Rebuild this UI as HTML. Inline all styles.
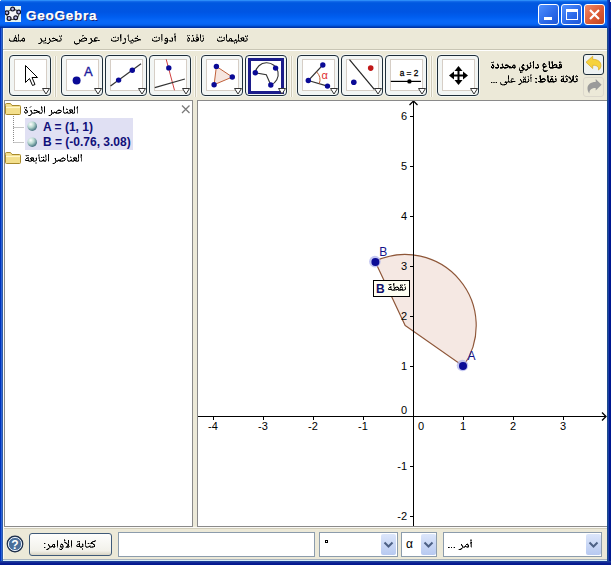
<!DOCTYPE html>
<html><head><meta charset="utf-8"><style>
*{margin:0;padding:0;box-sizing:border-box}
html,body{width:611px;height:565px;overflow:hidden;background:#0b3fc8;font-family:"Liberation Sans",sans-serif}
.abs{position:absolute}
#title{position:absolute;left:0;top:0;width:611px;height:28px;
 background:linear-gradient(#2b8cf8 0px,#2b8cf8 1px,#1a70ec 1px,#0a62e6 2px,#0058e0 3px,#0055e3 12px,#005ef0 17px,#0868f8 21px,#0866f6 24px,#0054da 26px,#0054da 26px,#0035a8 27px,#0035a8 28px)}
#client{position:absolute;left:3px;top:28px;width:604px;height:533px;background:#ece9d8;border-top:1px solid #eef0f2;border-left:1px solid #fbfaf4}
.cap{position:absolute;top:4px;width:21px;height:21px;border:1px solid #fff;border-radius:3px;
 background:linear-gradient(135deg,#4f90ff,#2a68e8 60%,#1f58d8)}
.tb{position:absolute;top:55px;width:42px;height:41px;border:1px solid #1e2e3a;border-radius:4px;background:#f2f5f4;box-shadow:0 0 0 1px #f4f6f2}
.ti{position:absolute;left:4px;top:3px;width:33px;height:32px;border:1px solid #d6cec6;background:#fff}
.tsel{position:absolute;top:58px;width:36px;height:36px;border:3px solid #1c1c8a;background:#fff}
.sep{position:absolute;top:56px;width:3px;height:41px;border-left:1px solid #f8f7f0;border-right:1px solid #f8f7f0;background:#d0ccba}
</style></head><body>
<div id="title"></div>
<div id="client"></div>
<!-- title icon -->
<div class="abs" style="left:5px;top:6px;width:16px;height:16px;background:#e6f2f0"></div>
<svg class="abs" style="left:5px;top:6px" width="16" height="16" viewBox="0 0 16 16">
 <ellipse cx="7.8" cy="8.4" rx="6" ry="5" fill="#f4f4f8" stroke="#555" stroke-width="1.1" transform="rotate(-8 7.8 8.4)"/>
 <g fill="#b8b8e8" stroke="#0e0e20" stroke-width="1.2"><circle cx="7.6" cy="3.1" r="1.9"/><circle cx="13.7" cy="6.1" r="1.9"/><circle cx="1.9" cy="6.7" r="1.9"/><circle cx="4.1" cy="12.4" r="1.9"/><circle cx="10.7" cy="11.8" r="1.9"/></g>
</svg>
<div class="abs" style="left:26px;top:8px;font-size:13.5px;font-weight:bold;color:#fff;letter-spacing:0.75px;-webkit-text-stroke:0.25px #fff;text-shadow:1px 1px 0 #0a1a70;line-height:16px">GeoGebra</div>
<div class="cap" style="left:538px"><div class="abs" style="left:5px;top:12px;width:8px;height:3px;background:#fff"></div></div>
<div class="cap" style="left:561px"><div class="abs" style="left:4px;top:4px;width:12px;height:11px;border:1px solid #fff;border-top-width:3px"></div></div>
<div class="cap" style="left:584px;background:linear-gradient(135deg,#f08a6a,#dc5a34 55%,#c04420)">
 <svg class="abs" style="left:0;top:0" width="19" height="19"><path d="M5 5 L14 14 M14 5 L5 14" stroke="#fff" stroke-width="2.2"/></svg></div>

<!-- menubar separator -->
<div class="abs" style="left:3px;top:49px;width:604px;height:1px;background:#c8c5b4"></div>
<div class="abs" style="left:3px;top:50px;width:604px;height:1px;background:#fff"></div>

<!-- toolbar -->
<div class="tb" style="left:9px"><div class="ti"></div></div><div class="tb" style="left:61px"><div class="ti"></div></div><div class="tb" style="left:105px"><div class="ti"></div></div><div class="tb" style="left:149px"><div class="ti"></div></div><div class="tb" style="left:201px"><div class="ti"></div></div><div class="tb" style="left:245px"></div><div class="tsel" style="left:248px"></div><div class="tb" style="left:297px"><div class="ti"></div></div><div class="tb" style="left:341px"><div class="ti"></div></div><div class="tb" style="left:385px"><div class="ti"></div></div><div class="tb" style="left:437px"><div class="ti"></div></div>
<div class="sep" style="left:54px"></div>
<div class="sep" style="left:194px"></div>
<div class="sep" style="left:290px"></div>
<div class="sep" style="left:430px"></div>
<!-- undo btn -->
<div class="abs" style="left:583px;top:54px;width:21px;height:21px;border:1px solid #1e2e3a;border-radius:3px;background:#eef2f2"></div>
<div class="abs" style="left:583px;top:77px;width:21px;height:20px;border:1px solid #dcd8cc;border-radius:3px"></div>

<svg style="position:absolute;left:0;top:0" width="611" height="101" viewBox="0 0 611 101">
 <defs>
  <path id="tri" d="M0 0 L7 0 L3.5 5.5 Z" fill="#fff" stroke="#333" stroke-width="1"/>
 </defs>
 <!-- triangles -->
 <use href="#tri" x="42.5" y="88.5"/><use href="#tri" x="94.5" y="88.5"/><use href="#tri" x="138.5" y="88.5"/><use href="#tri" x="182.5" y="88.5"/><use href="#tri" x="234.5" y="88.5"/><use href="#tri" x="278.5" y="88.5"/><use href="#tri" x="330.5" y="88.5"/><use href="#tri" x="374.5" y="88.5"/><use href="#tri" x="418.5" y="88.5"/><use href="#tri" x="470.5" y="88.5"/>
 <!-- arrow cursor -->
 <path d="M25.5 65.5 L25.5 82.5 L29.5 78.5 L32.5 85.5 L35 84.5 L32 77.5 L37.5 77.5 Z" fill="#fff" stroke="#000" stroke-width="1"/>
 <!-- point A -->
 <circle cx="76.6" cy="80.5" r="4" fill="#0a0a96"/>
 <text x="84" y="75.5" font-family="Liberation Sans" font-size="13" fill="#1c1c9c" stroke="#1c1c9c" stroke-width="0.35">A</text>
 <!-- line through 2 pts -->
 <line x1="110.5" y1="86" x2="141" y2="63.7" stroke="#333" stroke-width="1.2"/>
 <circle cx="118.6" cy="80.1" r="2.7" fill="#0a0a96"/>
 <circle cx="132.3" cy="70.2" r="2.7" fill="#0a0a96"/>
 <!-- perpendicular -->
 <line x1="166.2" y1="59.3" x2="174.5" y2="90.3" stroke="#d04040" stroke-width="1"/>
 <line x1="154.8" y1="87.6" x2="184.9" y2="79" stroke="#333" stroke-width="1.2"/>
 <circle cx="168.8" cy="67.9" r="2.7" fill="#0a0a96"/>
 <!-- polygon -->
 <path d="M216.4 66.4 L232.3 77 L214.1 84.7 Z" fill="#f6e6e0" stroke="#c0603a" stroke-width="1"/>
 <circle cx="216.4" cy="66.4" r="2.7" fill="#0a0a96"/>
 <circle cx="232.3" cy="77" r="2.7" fill="#0a0a96"/>
 <circle cx="214.1" cy="84.7" r="2.7" fill="#0a0a96"/>
 <!-- sector -->
 <path d="M255.3 72.8 A11.5 11.5 0 1 1 270.8 85 L266.3 74.8 Z" fill="none" stroke="#333" stroke-width="1.1"/>
 <circle cx="255.3" cy="72.8" r="2.7" fill="#0a0a96"/>
 <circle cx="275.6" cy="68.1" r="2.7" fill="#0a0a96"/>
 <circle cx="270.8" cy="85" r="2.7" fill="#0a0a96"/>
 <!-- angle -->
 <path d="M322.8 65 L308.3 80.5 L327.5 86.1" fill="none" stroke="#333" stroke-width="1.1"/>
 <path d="M316.5 71.8 A11.5 11.5 0 0 1 319.3 83.7" fill="none" stroke="#c0603a" stroke-width="1"/>
 <text x="321.5" y="79" font-family="Liberation Sans" font-size="11" fill="#e03030">α</text>
 <circle cx="322.8" cy="65" r="2.7" fill="#0a0a96"/>
 <circle cx="308.3" cy="80.5" r="2.7" fill="#0a0a96"/>
 <circle cx="327.5" cy="86.1" r="2.7" fill="#0a0a96"/>
 <!-- line + points -->
 <line x1="349.5" y1="59.7" x2="374.3" y2="89.4" stroke="#222" stroke-width="1.2"/>
 <circle cx="370.7" cy="68.1" r="2.8" fill="#c01818"/>
 <circle cx="353.8" cy="82.3" r="2.8" fill="#0a0a96"/>
 <!-- slider -->
 <text x="399.7" y="76" font-family="Liberation Sans" font-size="9.5" fill="#000" stroke="#000" stroke-width="0.3" textLength="18.6" lengthAdjust="spacingAndGlyphs">a = 2</text>
 <line x1="390.8" y1="81.4" x2="421" y2="81.4" stroke="#000" stroke-width="1.2"/>
 <circle cx="409.4" cy="81.4" r="2.2" fill="#000"/>
 <!-- move -->
 <g fill="#000">
  <rect x="454" y="74.5" width="9" height="2"/>
  <rect x="457.5" y="71" width="2" height="9"/>
  <path d="M449 75.5 L454 71.5 L454 79.5 Z"/>
  <path d="M468 75.5 L463 71.5 L463 79.5 Z"/>
  <path d="M458.5 66 L454.5 71 L462.5 71 Z"/>
  <path d="M458.5 85 L454.5 80 L462.5 80 Z"/>
 </g>
 <!-- undo -->
 <path d="M586 62.2 L592.7 56.2 L592.7 59.3 C597.5 59.3 601 61.5 601 65.5 C601 67.5 600 69 598.5 70 C599 67 597.5 65.3 592.7 65.3 L592.7 68.5 Z" fill="#f6d23c" stroke="#d8a820" stroke-width="0.7"/>
 <!-- redo -->
 <path d="M601.6 84.7 L595.7 79.1 L595.7 82 C590.5 82 587.5 84.5 587.5 88.5 C587.5 90.5 588.3 92.3 589.5 93.6 C589.2 90.5 590.5 88 595.7 88 L595.7 90.6 Z" fill="#9a9a9a"/>
</svg>


<!-- algebra panel -->
<div class="abs" style="left:4px;top:100px;width:189px;height:427px;border:1px solid #8a8a8a;background:#fff"></div>
<!-- graphics panel -->
<div class="abs" style="left:197px;top:100px;width:410px;height:427px;border-top:1px solid #8a8a8a;border-left:1px solid #8a8a8a;border-bottom:1px solid #8a8a8a;background:#fff"></div>

<svg class="abs" style="left:198px;top:101px" width="409" height="425" viewBox="198 101 409 425">
<path d="M405.2 325.5 L463.35 366.24 A71 71 0 0 0 375.00 261.24 Z" fill="#f5e8e3" stroke="#8e5638" stroke-width="1.15"/>
<g stroke="#000" stroke-width="1" shape-rendering="crispEdges">
<line x1="198" y1="416.5" x2="605" y2="416.5"/>
<line x1="413.5" y1="102" x2="413.5" y2="526"/>
<line x1="213.5" y1="416" x2="213.5" y2="420"/>
<line x1="263.5" y1="416" x2="263.5" y2="420"/>
<line x1="313.5" y1="416" x2="313.5" y2="420"/>
<line x1="363.5" y1="416" x2="363.5" y2="420"/>
<line x1="463.5" y1="416" x2="463.5" y2="420"/>
<line x1="513.5" y1="416" x2="513.5" y2="420"/>
<line x1="563.5" y1="416" x2="563.5" y2="420"/>
<line x1="410" y1="516.5" x2="414" y2="516.5"/>
<line x1="410" y1="466.5" x2="414" y2="466.5"/>
<line x1="410" y1="366.5" x2="414" y2="366.5"/>
<line x1="410" y1="316.5" x2="414" y2="316.5"/>
<line x1="410" y1="266.5" x2="414" y2="266.5"/>
<line x1="410" y1="216.5" x2="414" y2="216.5"/>
<line x1="410" y1="166.5" x2="414" y2="166.5"/>
<line x1="410" y1="116.5" x2="414" y2="116.5"/>
</g>
<path d="M602 412.5 L606 416.5 L602 420.5 M409.5 105 L413.5 101 L417.5 105" fill="none" stroke="#000" stroke-width="1.3"/>
<g font-family="Liberation Sans" font-size="11" fill="#000">
<text x="213" y="430" text-anchor="middle">-4</text>
<text x="263" y="430" text-anchor="middle">-3</text>
<text x="313" y="430" text-anchor="middle">-2</text>
<text x="363" y="430" text-anchor="middle">-1</text>
<text x="421" y="430" text-anchor="middle">0</text>
<text x="463" y="430" text-anchor="middle">1</text>
<text x="513" y="430" text-anchor="middle">2</text>
<text x="563" y="430" text-anchor="middle">3</text>
<text x="407" y="520" text-anchor="end">-2</text>
<text x="407" y="470" text-anchor="end">-1</text>
<text x="407" y="414" text-anchor="end">0</text>
<text x="407" y="370" text-anchor="end">1</text>
<text x="407" y="320" text-anchor="end">2</text>
<text x="407" y="270" text-anchor="end">3</text>
<text x="407" y="220" text-anchor="end">4</text>
<text x="407" y="170" text-anchor="end">5</text>
<text x="407" y="120" text-anchor="end">6</text>
</g>
<circle cx="462.5" cy="365.5" r="5.8" fill="#b0b4ec" opacity="0.75"/>
<circle cx="463" cy="366" r="4" fill="#0c0c96"/>
<circle cx="374.9" cy="261.6" r="5.8" fill="#b0b4ec" opacity="0.75"/>
<circle cx="375.4" cy="262.1" r="4" fill="#0c0c96"/>
<text x="467.5" y="359.5" font-family="Liberation Sans" font-size="12" fill="#14148a">A</text>
<text x="379.3" y="256" font-family="Liberation Sans" font-size="12" fill="#14148a">B</text>
<rect x="373.5" y="280.5" width="36" height="16" fill="#fefef2" stroke="#000" stroke-width="1"/>
<text x="376" y="293" font-family="Liberation Sans" font-size="12" font-weight="bold" fill="#10106a">B</text>
</svg>

<!-- bottom bar -->
<div class="abs" style="left:4px;top:527px;width:603px;height:1px;background:#fbfaf6"></div>
<div class="abs" style="left:4px;top:528px;width:603px;height:1px;background:#d2cebb"></div>
<div class="abs" style="left:3px;top:559px;width:604px;height:1px;background:#a8b4c0"></div>
<div class="abs" style="left:3px;top:560px;width:604px;height:1px;background:#d4ecf8"></div>
<div class="abs" style="left:0;top:561px;width:611px;height:4px;background:linear-gradient(#183b8c,#1c3ca0 25%,#0c1c90 50%,#001890)"></div>
<div class="abs" style="left:0;top:28px;width:3px;height:533px;background:linear-gradient(90deg,#0033bb 33%,#2b62d8 33%,#2b62d8 66%,#2c5aa8 66%)"></div>
<div class="abs" style="left:607px;top:28px;width:4px;height:533px;background:linear-gradient(90deg,#1c4a8a 25%,#1c3ea8 25%,#1c3ea8 50%,#001890 50%)"></div>
<div class="abs" style="left:607px;top:0;width:4px;height:28px;background:linear-gradient(90deg,#0848d0 25%,#0838b8 25%,#0838b8 50%,#0424a0 50%)"></div>
<div class="abs" style="left:610px;top:0;width:1px;height:2px;background:#e8eef8"></div><div class="abs" style="left:0;top:0;width:1px;height:1px;background:#e8eef8"></div>


<svg class="abs" style="left:6px;top:535px" width="18" height="18" viewBox="0 0 18 18">
 <circle cx="9" cy="9" r="7.8" fill="#4a6f9a" stroke="#1e2e48" stroke-width="1.2"/>
 <circle cx="9" cy="9" r="6.6" fill="none" stroke="#e8eef8" stroke-width="1"/>
 <text x="9" y="13.5" text-anchor="middle" font-family="Liberation Sans" font-weight="bold" font-size="12" fill="#fff">?</text>
</svg>
<div class="abs" style="left:29px;top:533px;width:83px;height:23px;border:1px solid #3f5a78;border-radius:3px;background:linear-gradient(#fefefd,#f2f1ea 80%,#d8d4c4)"></div>
<div class="abs" style="left:118px;top:532px;width:197px;height:25px;border:1px solid #8c9cac;background:#fff"></div>
<div class="abs" style="left:319px;top:532px;width:79px;height:25px;border:1px solid #8c9cac;background:#fff"></div>
<div class="abs" style="left:401px;top:532px;width:36px;height:25px;border:1px solid #8c9cac;background:#fff"></div>
<div class="abs" style="left:443px;top:532px;width:159px;height:25px;border:1px solid #8c9cac;background:#fff"></div>
<div class="abs" style="left:381px;top:534px;width:15px;height:21px;border-radius:2px;background:linear-gradient(#dce6fb,#b7c9f0)">
<svg class="abs" style="left:0;top:0" width="15" height="21"><path d="M3.5 8.5 L7.5 12.5 L11.5 8.5" fill="none" stroke="#4d6185" stroke-width="2"/></svg></div><div class="abs" style="left:421px;top:534px;width:15px;height:21px;border-radius:2px;background:linear-gradient(#dce6fb,#b7c9f0)">
<svg class="abs" style="left:0;top:0" width="15" height="21"><path d="M3.5 8.5 L7.5 12.5 L11.5 8.5" fill="none" stroke="#4d6185" stroke-width="2"/></svg></div><div class="abs" style="left:586px;top:534px;width:15px;height:21px;border-radius:2px;background:linear-gradient(#dce6fb,#b7c9f0)">
<svg class="abs" style="left:0;top:0" width="15" height="21"><path d="M3.5 8.5 L7.5 12.5 L11.5 8.5" fill="none" stroke="#4d6185" stroke-width="2"/></svg></div><div class="abs" style="left:325px;top:540px;width:3px;height:3px;border:1px solid #000"></div><div class="abs" style="left:406px;top:537px;font-size:12px;line-height:14px;color:#000">α</div>


<div class="abs" style="left:25px;top:118px;width:108px;height:32px;background:#e0e0f3"></div>
<svg class="abs" style="left:4px;top:101px" width="189" height="70" viewBox="4 101 189 70">
 <defs>
  <g id="folder">
   <path d="M0.5 2.5 L0.5 10.5 Q0.5 11.5 1.5 11.5 L14.5 11.5 Q15.5 11.5 15.5 10.5 L15.5 3.5 Q15.5 2.5 14.5 2.5 L7 2.5 L5.5 0.5 L1.5 0.5 Q0.5 0.5 0.5 1.5 Z" fill="#f3df8c" stroke="#a88a2c" stroke-width="1"/>
   <path d="M1 4.5 L15 4.5" stroke="#fff6c8" stroke-width="1.2"/>
  </g>
  <radialGradient id="sph" cx="0.35" cy="0.3" r="0.75"><stop offset="0" stop-color="#ffffff"/><stop offset="0.45" stop-color="#b8d8d0"/><stop offset="1" stop-color="#3a6878"/></radialGradient>
 </defs>
 <use href="#folder" x="5" y="103"/>
 <use href="#folder" x="5" y="152"/>
 <path d="M13.5 116 V142.5 M13.5 127.5 H24 M13.5 142.5 H24" stroke="#8a8a8a" stroke-width="1" stroke-dasharray="1 1" fill="none"/>
 <circle cx="32.2" cy="126.2" r="4.8" fill="url(#sph)"/>
 <circle cx="32.2" cy="142.2" r="4.8" fill="url(#sph)"/>
 <path d="M182 105.5 L189.5 113 M189.5 105.5 L182 113" stroke="#7a7a7a" stroke-width="1.3"/>
</svg>
<div class="abs" style="left:43px;top:120px;font-size:12px;font-weight:bold;color:#10107a;line-height:14px;white-space:nowrap">A = (1, 1)</div>
<div class="abs" style="left:43px;top:135px;font-size:12px;font-weight:bold;color:#10107a;line-height:14px;white-space:nowrap">B = (-0.76, 3.08)</div>
<svg class="abs" style="left:9px;top:29px" width="16" height="20" shape-rendering="crispEdges"><path fill="#000" fill-opacity="0.35" d="M5 8h1v1h-1zM7 8h1v1h-1zM14 8h1v1h-1zM0 9h1v1h-1zM6 9h1v1h-1zM4 10h1v1h-1zM12 10h1v1h-1zM2 11h2v1h-2zM8 11h1v1h-1zM5 12h2v1h-2zM9 12h2v1h-2zM13 12h1v1h-1zM15 12h1v1h-1z"/><path fill="#000" fill-opacity="0.7" d="M9 5h1v1h-1zM6 6h1v1h-1zM6 7h1v1h-1zM9 7h1v1h-1zM9 8h1v1h-1zM9 9h1v1h-1zM13 9h1v1h-1zM15 9h1v1h-1zM0 10h1v1h-1zM5 10h1v1h-1zM7 10h1v1h-1zM9 10h1v1h-1zM13 10h1v1h-1zM1 11h1v1h-1zM4 11h1v1h-1zM10 11h2v1h-2zM14 11h1v1h-1zM1 12h4v1h-4zM7 12h2v1h-2zM11 12h1v1h-1zM14 12h1v1h-1z"/><path fill="#000" fill-opacity="1.0" d="M9 6h1v1h-1zM6 8h1v1h-1zM5 9h1v1h-1zM7 9h1v1h-1zM14 9h1v1h-1zM15 10h1v1h-1zM0 11h1v1h-1zM5 11h3v1h-3zM9 11h1v1h-1zM12 11h2v1h-2zM15 11h1v1h-1z"/></svg>
<svg class="abs" style="left:38px;top:29px" width="24" height="20" shape-rendering="crispEdges"><path fill="#000" fill-opacity="0.35" d="M21 6h1v1h-1zM22 7h1v1h-1zM7 8h1v1h-1zM15 8h1v1h-1zM22 8h1v1h-1zM3 9h1v1h-1zM17 9h1v1h-1zM23 9h1v1h-1zM2 10h1v1h-1zM12 10h1v1h-1zM22 10h1v1h-1zM5 11h1v1h-1zM11 11h1v1h-1zM13 11h2v1h-2zM20 11h1v1h-1zM23 11h1v1h-1zM6 12h1v1h-1zM11 12h1v1h-1zM15 12h1v1h-1zM22 12h1v1h-1zM5 13h2v1h-2zM8 13h1v1h-1zM10 13h1v1h-1zM5 14h4v1h-4z"/><path fill="#000" fill-opacity="0.7" d="M23 6h1v1h-1zM21 7h1v1h-1zM23 7h1v1h-1zM2 9h1v1h-1zM22 9h1v1h-1zM7 10h1v1h-1zM19 10h1v1h-1zM23 10h1v1h-1zM4 11h1v1h-1zM6 11h1v1h-1zM15 11h1v1h-1zM17 11h1v1h-1zM19 11h1v1h-1zM21 11h2v1h-2zM3 12h3v1h-3zM12 12h3v1h-3zM19 12h3v1h-3zM2 13h2v1h-2zM7 13h1v1h-1zM0 14h1v1h-1zM2 14h1v1h-1z"/><path fill="#000" fill-opacity="1.0" d="M7 9h1v1h-1zM11 9h1v1h-1zM14 9h3v1h-3zM3 10h1v1h-1zM11 10h1v1h-1zM17 10h2v1h-2zM3 11h1v1h-1zM7 11h1v1h-1zM12 11h1v1h-1zM16 11h1v1h-1zM18 11h1v1h-1zM11 13h1v1h-1zM1 14h1v1h-1zM9 14h2v1h-2z"/></svg>
<svg class="abs" style="left:74px;top:29px" width="26" height="20" shape-rendering="crispEdges"><path fill="#000" fill-opacity="0.35" d="M8 7h1v1h-1zM11 8h1v1h-1zM23 8h1v1h-1zM22 9h2v1h-2zM8 10h1v1h-1zM16 10h1v1h-1zM21 10h1v1h-1zM8 11h2v1h-2zM19 11h1v1h-1zM10 12h1v1h-1zM22 12h1v1h-1zM5 14h1v1h-1zM1 15h1v1h-1zM3 15h1v1h-1z"/><path fill="#000" fill-opacity="0.7" d="M8 6h2v1h-2zM10 8h1v1h-1zM21 8h2v1h-2zM8 9h1v1h-1zM10 9h1v1h-1zM16 9h2v1h-2zM20 9h2v1h-2zM5 10h1v1h-1zM7 11h1v1h-1zM10 11h1v1h-1zM12 11h1v1h-1zM17 11h1v1h-1zM23 11h1v1h-1zM25 11h1v1h-1zM0 12h1v1h-1zM5 12h5v1h-5zM17 12h5v1h-5zM5 13h1v1h-1zM16 13h1v1h-1zM0 14h1v1h-1zM2 14h1v1h-1zM14 14h1v1h-1zM16 14h1v1h-1zM2 15h1v1h-1z"/><path fill="#000" fill-opacity="1.0" d="M9 9h1v1h-1zM11 9h2v1h-2zM7 10h1v1h-1zM12 10h1v1h-1zM17 10h1v1h-1zM20 10h1v1h-1zM5 11h2v1h-2zM11 11h1v1h-1zM18 11h1v1h-1zM20 11h3v1h-3zM24 11h1v1h-1zM0 13h1v1h-1zM17 13h1v1h-1zM1 14h1v1h-1zM3 14h2v1h-2zM15 14h1v1h-1z"/></svg>
<svg class="abs" style="left:111px;top:29px" width="30" height="20" shape-rendering="crispEdges"><path fill="#000" fill-opacity="0.35" d="M10 5h1v1h-1zM17 5h1v1h-1zM10 6h1v1h-1zM16 6h1v1h-1zM26 6h1v1h-1zM4 7h1v1h-1zM10 7h1v1h-1zM16 7h1v1h-1zM3 8h1v1h-1zM6 8h1v1h-1zM10 8h1v1h-1zM24 8h2v1h-2zM0 9h1v1h-1zM6 9h1v1h-1zM10 9h1v1h-1zM23 9h1v1h-1zM10 10h1v1h-1zM13 10h1v1h-1zM26 10h1v1h-1zM2 11h2v1h-2zM7 11h1v1h-1zM10 11h1v1h-1zM18 11h2v1h-2zM23 11h1v1h-1zM28 11h2v1h-2zM1 12h1v1h-1zM5 12h1v1h-1zM9 12h1v1h-1zM20 12h1v1h-1zM25 12h1v1h-1zM12 13h1v1h-1zM19 13h1v1h-1zM21 13h2v1h-2zM19 14h3v1h-3z"/><path fill="#000" fill-opacity="0.7" d="M9 5h1v1h-1zM17 6h1v1h-1zM17 7h1v1h-1zM4 8h1v1h-1zM7 8h1v1h-1zM17 8h1v1h-1zM7 9h1v1h-1zM9 9h1v1h-1zM13 9h2v1h-2zM17 9h1v1h-1zM0 10h1v1h-1zM7 10h1v1h-1zM9 10h1v1h-1zM17 10h1v1h-1zM21 10h1v1h-1zM29 10h1v1h-1zM1 11h1v1h-1zM4 11h2v1h-2zM9 11h1v1h-1zM14 11h1v1h-1zM17 11h1v1h-1zM20 11h1v1h-1zM22 11h1v1h-1zM24 11h2v1h-2zM27 11h1v1h-1zM2 12h3v1h-3zM14 12h1v1h-1zM18 12h2v1h-2zM22 12h3v1h-3zM13 13h2v1h-2zM20 13h1v1h-1zM11 14h1v1h-1zM13 14h1v1h-1z"/><path fill="#000" fill-opacity="1.0" d="M9 6h1v1h-1zM9 7h1v1h-1zM26 7h1v1h-1zM2 8h1v1h-1zM9 8h1v1h-1zM24 9h3v1h-3zM14 10h1v1h-1zM27 10h2v1h-2zM0 11h1v1h-1zM6 11h1v1h-1zM21 11h1v1h-1zM26 11h1v1h-1zM12 14h1v1h-1z"/></svg>
<svg class="abs" style="left:152px;top:29px" width="24" height="20" shape-rendering="crispEdges"><path fill="#000" fill-opacity="0.35" d="M22 4h2v1h-2zM10 5h1v1h-1zM23 5h1v1h-1zM10 6h1v1h-1zM22 6h2v1h-2zM4 7h1v1h-1zM10 7h1v1h-1zM3 8h1v1h-1zM6 8h1v1h-1zM10 8h1v1h-1zM14 8h1v1h-1zM19 8h2v1h-2zM0 9h1v1h-1zM6 9h1v1h-1zM10 9h1v1h-1zM19 9h1v1h-1zM22 9h1v1h-1zM10 10h1v1h-1zM12 10h2v1h-2zM22 10h1v1h-1zM2 11h2v1h-2zM7 11h1v1h-1zM9 11h2v1h-2zM12 11h1v1h-1zM16 11h1v1h-1zM19 11h1v1h-1zM22 11h1v1h-1zM1 12h1v1h-1zM5 12h1v1h-1zM9 12h1v1h-1zM13 12h1v1h-1zM17 12h1v1h-1zM20 12h1v1h-1zM23 12h1v1h-1zM12 13h2v1h-2z"/><path fill="#000" fill-opacity="0.7" d="M9 5h1v1h-1zM22 5h1v1h-1zM9 6h1v1h-1zM9 7h1v1h-1zM22 7h1v1h-1zM4 8h1v1h-1zM7 8h1v1h-1zM9 8h1v1h-1zM22 8h2v1h-2zM7 9h1v1h-1zM9 9h1v1h-1zM15 9h1v1h-1zM23 9h1v1h-1zM0 10h1v1h-1zM7 10h1v1h-1zM9 10h1v1h-1zM23 10h1v1h-1zM1 11h1v1h-1zM4 11h2v1h-2zM14 11h1v1h-1zM17 11h2v1h-2zM23 11h1v1h-1zM2 12h3v1h-3zM14 12h1v1h-1zM18 12h2v1h-2zM14 13h2v1h-2zM12 14h1v1h-1zM14 14h1v1h-1z"/><path fill="#000" fill-opacity="1.0" d="M23 7h1v1h-1zM2 8h1v1h-1zM13 9h2v1h-2zM20 9h1v1h-1zM15 10h1v1h-1zM20 10h1v1h-1zM0 11h1v1h-1zM6 11h1v1h-1zM13 11h1v1h-1zM15 11h1v1h-1zM20 11h1v1h-1zM15 12h1v1h-1zM13 14h1v1h-1z"/></svg>
<svg class="abs" style="left:187px;top:29px" width="17" height="20" shape-rendering="crispEdges"><path fill="#000" fill-opacity="0.35" d="M9 5h2v1h-2zM1 6h1v1h-1zM6 6h1v1h-1zM9 6h2v1h-2zM15 6h2v1h-2zM0 7h1v1h-1zM5 7h1v1h-1zM9 7h2v1h-2zM15 7h2v1h-2zM6 8h1v1h-1zM11 8h1v1h-1zM16 8h1v1h-1zM0 9h1v1h-1zM8 9h3v1h-3zM5 11h1v1h-1zM8 11h1v1h-1zM14 11h1v1h-1zM0 12h1v1h-1zM6 12h2v1h-2zM10 12h1v1h-1z"/><path fill="#000" fill-opacity="0.7" d="M13 5h1v1h-1zM0 6h1v1h-1zM2 6h1v1h-1zM9 8h1v1h-1zM1 9h1v1h-1zM13 9h1v1h-1zM0 10h1v1h-1zM2 10h1v1h-1zM13 10h1v1h-1zM16 10h1v1h-1zM0 11h3v1h-3zM4 11h1v1h-1zM9 11h1v1h-1zM11 11h1v1h-1zM13 11h1v1h-1zM15 11h2v1h-2zM1 12h1v1h-1zM4 12h2v1h-2zM8 12h2v1h-2zM14 12h2v1h-2z"/><path fill="#000" fill-opacity="1.0" d="M5 6h1v1h-1zM13 6h1v1h-1zM13 7h1v1h-1zM1 8h1v1h-1zM10 8h1v1h-1zM13 8h1v1h-1zM2 9h1v1h-1zM6 9h1v1h-1zM11 9h1v1h-1zM16 9h1v1h-1zM6 10h1v1h-1zM9 10h3v1h-3zM6 11h2v1h-2zM10 11h1v1h-1z"/></svg>
<svg class="abs" style="left:217px;top:29px" width="31" height="20" shape-rendering="crispEdges"><path fill="#000" fill-opacity="0.35" d="M28 6h1v1h-1zM2 7h1v1h-1zM4 7h1v1h-1zM29 7h1v1h-1zM3 8h1v1h-1zM6 8h1v1h-1zM24 8h1v1h-1zM29 8h1v1h-1zM0 9h1v1h-1zM6 9h1v1h-1zM12 9h1v1h-1zM25 9h1v1h-1zM27 9h1v1h-1zM30 9h1v1h-1zM19 10h1v1h-1zM25 10h1v1h-1zM27 10h1v1h-1zM29 10h1v1h-1zM2 11h2v1h-2zM7 11h1v1h-1zM16 11h1v1h-1zM20 11h1v1h-1zM23 11h1v1h-1zM27 11h1v1h-1zM30 11h1v1h-1zM5 12h1v1h-1zM12 12h2v1h-2zM17 12h1v1h-1zM21 12h1v1h-1zM24 12h1v1h-1zM26 12h1v1h-1zM29 12h1v1h-1zM18 13h1v1h-1zM19 14h1v1h-1z"/><path fill="#000" fill-opacity="0.7" d="M9 5h1v1h-1zM21 5h1v1h-1zM30 6h1v1h-1zM30 7h1v1h-1zM4 8h1v1h-1zM7 8h1v1h-1zM25 8h2v1h-2zM7 9h1v1h-1zM9 9h1v1h-1zM14 9h1v1h-1zM21 9h1v1h-1zM23 9h1v1h-1zM29 9h1v1h-1zM0 10h1v1h-1zM7 10h1v1h-1zM9 10h1v1h-1zM18 10h1v1h-1zM21 10h1v1h-1zM30 10h1v1h-1zM1 11h1v1h-1zM4 11h1v1h-1zM9 11h3v1h-3zM13 11h1v1h-1zM17 11h1v1h-1zM19 11h1v1h-1zM22 11h1v1h-1zM24 11h1v1h-1zM28 11h2v1h-2zM1 12h4v1h-4zM10 12h2v1h-2zM14 12h3v1h-3zM19 12h2v1h-2zM22 12h2v1h-2zM27 12h2v1h-2zM17 13h1v1h-1zM17 14h1v1h-1z"/><path fill="#000" fill-opacity="1.0" d="M9 6h1v1h-1zM21 6h1v1h-1zM9 7h1v1h-1zM21 7h1v1h-1zM28 7h1v1h-1zM2 8h1v1h-1zM9 8h1v1h-1zM21 8h1v1h-1zM13 9h1v1h-1zM24 9h1v1h-1zM26 9h1v1h-1zM12 10h1v1h-1zM14 10h1v1h-1zM24 10h1v1h-1zM26 10h1v1h-1zM0 11h1v1h-1zM5 11h2v1h-2zM12 11h1v1h-1zM14 11h2v1h-2zM18 11h1v1h-1zM21 11h1v1h-1zM25 11h2v1h-2zM19 13h1v1h-1z"/></svg>
<svg class="abs" style="left:24px;top:101px" width="54" height="20" shape-rendering="crispEdges"><path fill="#000" fill-opacity="0.35" d="M6 5h2v1h-2zM1 6h1v1h-1zM5 6h2v1h-2zM18 6h1v1h-1zM52 6h1v1h-1zM0 7h1v1h-1zM2 7h1v1h-1zM18 7h1v1h-1zM42 7h1v1h-1zM52 7h1v1h-1zM2 8h1v1h-1zM10 8h1v1h-1zM18 8h1v1h-1zM34 8h2v1h-2zM45 8h1v1h-1zM48 8h1v1h-1zM3 9h1v1h-1zM9 9h1v1h-1zM13 9h1v1h-1zM17 9h1v1h-1zM37 9h1v1h-1zM2 10h1v1h-1zM6 10h1v1h-1zM12 10h1v1h-1zM30 10h1v1h-1zM33 10h1v1h-1zM36 10h1v1h-1zM45 10h1v1h-1zM47 10h1v1h-1zM9 11h1v1h-1zM16 11h1v1h-1zM18 11h1v1h-1zM33 11h1v1h-1zM41 11h1v1h-1zM44 11h2v1h-2zM49 11h1v1h-1zM2 12h1v1h-1zM11 12h1v1h-1zM20 12h1v1h-1zM31 12h1v1h-1zM35 12h1v1h-1zM42 12h2v1h-2zM46 12h1v1h-1zM50 12h1v1h-1zM53 12h1v1h-1zM26 13h1v1h-1zM24 14h1v1h-1z"/><path fill="#000" fill-opacity="0.7" d="M17 5h1v1h-1zM20 5h1v1h-1zM39 5h1v1h-1zM50 5h1v1h-1zM53 5h1v1h-1zM0 6h1v1h-1zM17 7h1v1h-1zM53 7h1v1h-1zM17 8h1v1h-1zM42 8h2v1h-2zM46 8h2v1h-2zM53 8h1v1h-1zM1 9h1v1h-1zM6 9h2v1h-2zM18 9h1v1h-1zM33 9h1v1h-1zM39 9h1v1h-1zM46 9h2v1h-2zM50 9h1v1h-1zM53 9h1v1h-1zM0 10h1v1h-1zM15 10h1v1h-1zM18 10h1v1h-1zM32 10h1v1h-1zM37 10h1v1h-1zM39 10h1v1h-1zM43 10h1v1h-1zM50 10h1v1h-1zM53 10h1v1h-1zM0 11h4v1h-4zM7 11h2v1h-2zM10 11h2v1h-2zM13 11h1v1h-1zM15 11h1v1h-1zM17 11h1v1h-1zM20 11h1v1h-1zM27 11h3v1h-3zM34 11h1v1h-1zM39 11h2v1h-2zM48 11h1v1h-1zM53 11h1v1h-1zM1 12h1v1h-1zM7 12h4v1h-4zM15 12h3v1h-3zM27 12h3v1h-3zM32 12h3v1h-3zM40 12h2v1h-2zM44 12h2v1h-2zM48 12h2v1h-2zM6 13h2v1h-2zM4 14h1v1h-1zM6 14h1v1h-1zM26 14h1v1h-1z"/><path fill="#000" fill-opacity="1.0" d="M2 6h1v1h-1zM17 6h1v1h-1zM20 6h1v1h-1zM39 6h1v1h-1zM50 6h1v1h-1zM53 6h1v1h-1zM20 7h1v1h-1zM39 7h1v1h-1zM50 7h1v1h-1zM1 8h1v1h-1zM20 8h1v1h-1zM39 8h1v1h-1zM50 8h1v1h-1zM2 9h1v1h-1zM10 9h3v1h-3zM20 9h1v1h-1zM27 9h1v1h-1zM34 9h3v1h-3zM45 9h1v1h-1zM48 9h1v1h-1zM3 10h1v1h-1zM7 10h1v1h-1zM13 10h2v1h-2zM20 10h1v1h-1zM27 10h1v1h-1zM46 10h1v1h-1zM48 10h1v1h-1zM12 11h1v1h-1zM14 11h1v1h-1zM30 11h3v1h-3zM35 11h2v1h-2zM42 11h2v1h-2zM46 11h2v1h-2zM50 11h1v1h-1zM27 13h1v1h-1zM5 14h1v1h-1zM25 14h1v1h-1z"/></svg>
<svg class="abs" style="left:25px;top:149px" width="57" height="20" shape-rendering="crispEdges"><path fill="#000" fill-opacity="0.35" d="M13 5h2v1h-2zM20 5h1v1h-1zM55 5h1v1h-1zM0 6h1v1h-1zM14 6h1v1h-1zM21 6h1v1h-1zM55 6h1v1h-1zM1 7h1v1h-1zM13 7h2v1h-2zM18 7h1v1h-1zM21 7h1v1h-1zM45 7h1v1h-1zM55 7h1v1h-1zM8 8h1v1h-1zM11 8h1v1h-1zM13 8h1v1h-1zM17 8h1v1h-1zM19 8h3v1h-3zM37 8h1v1h-1zM46 8h1v1h-1zM48 8h1v1h-1zM51 8h1v1h-1zM55 8h1v1h-1zM10 9h1v1h-1zM13 9h1v1h-1zM20 9h2v1h-2zM29 9h1v1h-1zM40 9h1v1h-1zM5 10h1v1h-1zM7 10h1v1h-1zM20 10h1v1h-1zM33 10h2v1h-2zM36 10h1v1h-1zM39 10h1v1h-1zM48 10h1v1h-1zM50 10h1v1h-1zM4 11h2v1h-2zM9 11h1v1h-1zM15 11h2v1h-2zM21 11h1v1h-1zM36 11h1v1h-1zM44 11h1v1h-1zM47 11h1v1h-1zM52 11h1v1h-1zM3 12h1v1h-1zM6 12h1v1h-1zM10 12h1v1h-1zM14 12h1v1h-1zM17 12h2v1h-2zM23 12h1v1h-1zM34 12h1v1h-1zM38 12h1v1h-1zM45 12h2v1h-2zM50 12h1v1h-1zM53 12h1v1h-1zM56 12h1v1h-1zM10 13h2v1h-2zM29 13h1v1h-1zM10 14h2v1h-2zM27 14h1v1h-1z"/><path fill="#000" fill-opacity="0.7" d="M42 5h1v1h-1zM53 5h1v1h-1zM56 5h1v1h-1zM1 6h3v1h-3zM13 6h1v1h-1zM20 6h1v1h-1zM20 7h1v1h-1zM56 7h1v1h-1zM2 8h2v1h-2zM6 8h2v1h-2zM14 8h1v1h-1zM38 8h1v1h-1zM45 8h1v1h-1zM49 8h2v1h-2zM56 8h1v1h-1zM2 9h2v1h-2zM6 9h2v1h-2zM14 9h1v1h-1zM36 9h1v1h-1zM38 9h1v1h-1zM42 9h1v1h-1zM49 9h2v1h-2zM53 9h1v1h-1zM56 9h1v1h-1zM0 10h1v1h-1zM3 10h1v1h-1zM14 10h1v1h-1zM21 10h1v1h-1zM35 10h1v1h-1zM40 10h1v1h-1zM42 10h1v1h-1zM46 10h1v1h-1zM51 10h1v1h-1zM53 10h1v1h-1zM56 10h1v1h-1zM0 11h1v1h-1zM8 11h1v1h-1zM10 11h2v1h-2zM19 11h2v1h-2zM30 11h3v1h-3zM37 11h2v1h-2zM42 11h2v1h-2zM48 11h1v1h-1zM51 11h1v1h-1zM56 11h1v1h-1zM4 12h2v1h-2zM8 12h2v1h-2zM15 12h2v1h-2zM19 12h2v1h-2zM30 12h3v1h-3zM35 12h3v1h-3zM43 12h2v1h-2zM47 12h2v1h-2zM51 12h2v1h-2zM29 14h1v1h-1z"/><path fill="#000" fill-opacity="1.0" d="M23 5h1v1h-1zM23 6h1v1h-1zM42 6h1v1h-1zM53 6h1v1h-1zM56 6h1v1h-1zM23 7h1v1h-1zM42 7h1v1h-1zM53 7h1v1h-1zM16 8h1v1h-1zM18 8h1v1h-1zM23 8h1v1h-1zM42 8h1v1h-1zM53 8h1v1h-1zM1 9h1v1h-1zM5 9h1v1h-1zM8 9h1v1h-1zM11 9h1v1h-1zM23 9h1v1h-1zM30 9h1v1h-1zM37 9h1v1h-1zM39 9h1v1h-1zM48 9h1v1h-1zM51 9h1v1h-1zM6 10h1v1h-1zM8 10h1v1h-1zM11 10h1v1h-1zM18 10h1v1h-1zM23 10h1v1h-1zM30 10h1v1h-1zM49 10h1v1h-1zM1 11h3v1h-3zM6 11h2v1h-2zM14 11h1v1h-1zM17 11h2v1h-2zM23 11h1v1h-1zM33 11h3v1h-3zM39 11h1v1h-1zM45 11h2v1h-2zM49 11h2v1h-2zM53 11h1v1h-1zM30 13h1v1h-1zM28 14h1v1h-1z"/></svg>
<svg class="abs" style="left:491px;top:56px" width="71" height="20" shape-rendering="crispEdges"><path fill="#000" fill-opacity="0.35" d="M2 5h1v1h-1zM57 5h1v1h-1zM60 5h1v1h-1zM68 5h2v1h-2zM41 6h1v1h-1zM57 6h1v1h-1zM70 6h1v1h-1zM6 7h1v1h-1zM11 7h1v1h-1zM38 7h1v1h-1zM57 7h1v1h-1zM60 7h1v1h-1zM69 7h1v1h-1zM2 8h1v1h-1zM7 8h1v1h-1zM10 8h1v1h-1zM14 8h1v1h-1zM16 8h1v1h-1zM22 8h2v1h-2zM31 8h1v1h-1zM36 8h1v1h-1zM47 8h1v1h-1zM51 8h1v1h-1zM57 8h1v1h-1zM21 9h1v1h-1zM24 9h1v1h-1zM33 9h1v1h-1zM35 9h1v1h-1zM40 9h1v1h-1zM54 9h2v1h-2zM64 9h1v1h-1zM66 9h1v1h-1zM69 9h1v1h-1zM3 10h1v1h-1zM22 10h1v1h-1zM37 10h1v1h-1zM40 10h1v1h-1zM51 10h1v1h-1zM62 10h1v1h-1zM64 10h1v1h-1zM66 10h1v1h-1zM17 11h1v1h-1zM28 11h1v1h-1zM54 11h1v1h-1zM2 12h1v1h-1zM4 12h1v1h-1zM11 12h1v1h-1zM15 12h1v1h-1zM18 12h3v1h-3zM22 12h1v1h-1zM42 12h1v1h-1zM44 12h1v1h-1zM62 12h1v1h-1zM66 12h1v1h-1zM69 12h1v1h-1zM31 13h1v1h-1zM51 13h1v1h-1zM32 14h1v1h-1zM30 15h2v1h-2zM52 15h1v1h-1zM31 16h1v1h-1z"/><path fill="#000" fill-opacity="0.7" d="M58 5h1v1h-1zM61 5h1v1h-1zM0 6h3v1h-3zM39 6h1v1h-1zM60 6h1v1h-1zM69 6h1v1h-1zM52 7h1v1h-1zM15 8h1v1h-1zM39 8h1v1h-1zM53 8h2v1h-2zM65 8h1v1h-1zM70 8h1v1h-1zM6 9h1v1h-1zM17 9h1v1h-1zM46 9h2v1h-2zM51 9h2v1h-2zM63 9h1v1h-1zM11 10h2v1h-2zM16 10h1v1h-1zM19 10h1v1h-1zM23 10h2v1h-2zM30 10h2v1h-2zM39 10h1v1h-1zM55 10h1v1h-1zM68 10h1v1h-1zM24 11h1v1h-1zM30 11h1v1h-1zM32 11h1v1h-1zM36 11h1v1h-1zM1 12h1v1h-1zM5 12h2v1h-2zM9 12h2v1h-2zM13 12h2v1h-2zM23 12h1v1h-1zM28 12h1v1h-1zM33 12h1v1h-1zM36 12h3v1h-3zM45 12h2v1h-2zM52 12h1v1h-1zM59 12h3v1h-3zM67 12h2v1h-2zM33 13h2v1h-2zM52 13h1v1h-1zM28 14h1v1h-1zM34 14h2v1h-2zM53 14h4v1h-4zM29 15h1v1h-1zM55 15h1v1h-1zM30 16h1v1h-1z"/><path fill="#000" fill-opacity="1.0" d="M42 5h1v1h-1zM42 6h1v1h-1zM58 6h1v1h-1zM61 6h1v1h-1zM68 6h1v1h-1zM39 7h1v1h-1zM42 7h1v1h-1zM53 7h1v1h-1zM58 7h1v1h-1zM61 7h1v1h-1zM1 8h1v1h-1zM6 8h1v1h-1zM11 8h1v1h-1zM32 8h1v1h-1zM42 8h1v1h-1zM46 8h1v1h-1zM52 8h1v1h-1zM58 8h1v1h-1zM61 8h1v1h-1zM63 8h2v1h-2zM68 8h2v1h-2zM1 9h2v1h-2zM7 9h1v1h-1zM11 9h1v1h-1zM14 9h3v1h-3zM22 9h2v1h-2zM31 9h2v1h-2zM36 9h1v1h-1zM39 9h1v1h-1zM42 9h1v1h-1zM58 9h1v1h-1zM61 9h2v1h-2zM65 9h1v1h-1zM68 9h1v1h-1zM70 9h1v1h-1zM0 10h1v1h-1zM2 10h1v1h-1zM7 10h1v1h-1zM17 10h2v1h-2zM21 10h1v1h-1zM36 10h1v1h-1zM42 10h1v1h-1zM47 10h1v1h-1zM52 10h3v1h-3zM58 10h1v1h-1zM61 10h1v1h-1zM65 10h1v1h-1zM69 10h2v1h-2zM0 11h3v1h-3zM4 11h4v1h-4zM9 11h8v1h-8zM18 11h6v1h-6zM31 11h1v1h-1zM37 11h3v1h-3zM42 11h1v1h-1zM44 11h4v1h-4zM52 11h2v1h-2zM58 11h13v1h-13zM31 12h2v1h-2zM28 13h1v1h-1zM32 13h1v1h-1zM35 13h2v1h-2zM29 14h3v1h-3zM52 14h1v1h-1zM53 15h2v1h-2zM29 16h1v1h-1z"/></svg>
<svg class="abs" style="left:491px;top:70px" width="87" height="20" shape-rendering="crispEdges"><path fill="#000" fill-opacity="0.35" d="M39 4h2v1h-2zM40 5h1v1h-1zM48 5h1v1h-1zM57 5h1v1h-1zM72 5h1v1h-1zM32 6h1v1h-1zM34 6h1v1h-1zM36 6h1v1h-1zM39 6h1v1h-1zM59 6h1v1h-1zM77 6h2v1h-2zM33 7h1v1h-1zM37 7h1v1h-1zM48 7h1v1h-1zM60 7h1v1h-1zM74 7h1v1h-1zM79 7h1v1h-1zM84 7h1v1h-1zM20 8h1v1h-1zM22 8h1v1h-1zM34 8h1v1h-1zM37 8h1v1h-1zM40 8h1v1h-1zM48 8h1v1h-1zM65 8h1v1h-1zM76 8h1v1h-1zM86 8h1v1h-1zM21 9h2v1h-2zM39 9h2v1h-2zM45 9h1v1h-1zM62 9h1v1h-1zM80 9h1v1h-1zM19 10h1v1h-1zM38 10h3v1h-3zM53 10h1v1h-1zM62 10h1v1h-1zM64 10h1v1h-1zM69 10h1v1h-1zM71 10h1v1h-1zM75 10h1v1h-1zM85 10h1v1h-1zM15 11h2v1h-2zM19 11h1v1h-1zM24 11h1v1h-1zM31 11h1v1h-1zM35 11h1v1h-1zM39 11h2v1h-2zM44 11h2v1h-2zM56 11h1v1h-1zM65 11h1v1h-1zM76 11h1v1h-1zM78 11h1v1h-1zM81 11h1v1h-1zM86 11h1v1h-1zM1 12h1v1h-1zM4 12h1v1h-1zM13 12h1v1h-1zM17 12h1v1h-1zM21 12h1v1h-1zM33 12h1v1h-1zM48 12h1v1h-1zM52 12h1v1h-1zM57 12h1v1h-1zM59 12h3v1h-3zM63 12h1v1h-1zM73 12h2v1h-2zM77 12h1v1h-1zM80 12h1v1h-1zM83 12h2v1h-2zM10 13h1v1h-1zM28 13h1v1h-1zM30 13h1v1h-1zM9 14h1v1h-1zM15 14h1v1h-1zM29 14h1v1h-1zM11 15h3v1h-3z"/><path fill="#000" fill-opacity="0.7" d="M17 5h1v1h-1zM39 5h1v1h-1zM49 5h1v1h-1zM56 5h1v1h-1zM75 5h1v1h-1zM82 5h1v1h-1zM85 5h1v1h-1zM37 6h1v1h-1zM48 6h1v1h-1zM57 6h1v1h-1zM60 6h1v1h-1zM71 6h2v1h-2zM74 6h2v1h-2zM81 6h1v1h-1zM84 6h2v1h-2zM32 7h1v1h-1zM34 7h1v1h-1zM39 7h2v1h-2zM57 7h1v1h-1zM72 7h1v1h-1zM77 7h1v1h-1zM81 7h1v1h-1zM21 8h1v1h-1zM33 8h1v1h-1zM39 8h1v1h-1zM51 8h1v1h-1zM53 8h1v1h-1zM56 8h2v1h-2zM61 8h1v1h-1zM64 8h1v1h-1zM71 8h1v1h-1zM75 8h1v1h-1zM78 8h1v1h-1zM81 8h1v1h-1zM85 8h1v1h-1zM17 9h1v1h-1zM20 9h1v1h-1zM33 9h1v1h-1zM52 9h1v1h-1zM54 9h1v1h-1zM56 9h2v1h-2zM65 9h1v1h-1zM71 9h1v1h-1zM76 9h1v1h-1zM79 9h1v1h-1zM86 9h1v1h-1zM17 10h1v1h-1zM20 10h1v1h-1zM29 10h2v1h-2zM32 10h1v1h-1zM34 10h1v1h-1zM37 10h1v1h-1zM50 10h1v1h-1zM54 10h1v1h-1zM56 10h1v1h-1zM61 10h1v1h-1zM65 10h1v1h-1zM76 10h1v1h-1zM82 10h1v1h-1zM86 10h1v1h-1zM14 11h1v1h-1zM18 11h1v1h-1zM36 11h1v1h-1zM79 11h1v1h-1zM82 11h1v1h-1zM2 12h2v1h-2zM9 12h1v1h-1zM16 12h1v1h-1zM18 12h3v1h-3zM30 12h3v1h-3zM34 12h3v1h-3zM44 12h1v1h-1zM49 12h3v1h-3zM58 12h1v1h-1zM62 12h1v1h-1zM78 12h2v1h-2zM9 13h1v1h-1zM11 14h2v1h-2zM27 14h1v1h-1z"/><path fill="#000" fill-opacity="1.0" d="M17 6h1v1h-1zM49 6h1v1h-1zM56 6h1v1h-1zM61 6h1v1h-1zM64 6h1v1h-1zM70 6h1v1h-1zM76 6h1v1h-1zM82 6h1v1h-1zM86 6h1v1h-1zM17 7h1v1h-1zM49 7h1v1h-1zM56 7h1v1h-1zM78 7h1v1h-1zM82 7h1v1h-1zM17 8h1v1h-1zM44 8h2v1h-2zM49 8h1v1h-1zM52 8h1v1h-1zM60 8h1v1h-1zM72 8h1v1h-1zM79 8h1v1h-1zM82 8h1v1h-1zM29 9h1v1h-1zM32 9h1v1h-1zM34 9h1v1h-1zM37 9h1v1h-1zM49 9h3v1h-3zM53 9h1v1h-1zM59 9h3v1h-3zM64 9h1v1h-1zM70 9h1v1h-1zM72 9h1v1h-1zM75 9h1v1h-1zM81 9h2v1h-2zM85 9h1v1h-1zM49 10h1v1h-1zM57 10h1v1h-1zM59 10h1v1h-1zM70 10h1v1h-1zM72 10h1v1h-1zM80 10h2v1h-2zM17 11h1v1h-1zM20 11h4v1h-4zM30 11h1v1h-1zM32 11h3v1h-3zM37 11h1v1h-1zM47 11h7v1h-7zM57 11h8v1h-8zM70 11h6v1h-6zM80 11h1v1h-1zM83 11h3v1h-3zM0 12h1v1h-1zM5 12h1v1h-1zM14 12h2v1h-2zM45 12h1v1h-1zM15 13h1v1h-1zM29 13h1v1h-1zM10 14h1v1h-1zM13 14h2v1h-2zM28 14h1v1h-1z"/></svg>
<svg class="abs" style="left:388px;top:278px" width="18" height="20" shape-rendering="crispEdges"><path fill="#000" fill-opacity="0.35" d="M6 5h1v1h-1zM0 6h1v1h-1zM3 6h1v1h-1zM6 6h1v1h-1zM12 6h3v1h-3zM17 6h1v1h-1zM1 7h1v1h-1zM6 7h1v1h-1zM13 7h1v1h-1zM16 7h1v1h-1zM3 8h1v1h-1zM5 8h2v1h-2zM8 8h2v1h-2zM12 8h1v1h-1zM17 8h1v1h-1zM3 9h1v1h-1zM5 9h1v1h-1zM16 9h1v1h-1zM2 10h2v1h-2zM7 10h1v1h-1zM11 10h2v1h-2zM4 11h1v1h-1zM15 11h1v1h-1zM3 12h1v1h-1zM7 12h2v1h-2zM13 12h1v1h-1zM16 12h1v1h-1z"/><path fill="#000" fill-opacity="0.7" d="M5 5h1v1h-1zM1 6h1v1h-1zM16 6h1v1h-1zM5 7h1v1h-1zM14 7h1v1h-1zM2 8h1v1h-1zM13 8h1v1h-1zM6 9h1v1h-1zM8 9h1v1h-1zM10 9h1v1h-1zM13 9h2v1h-2zM17 9h1v1h-1zM0 10h1v1h-1zM14 10h1v1h-1zM0 11h1v1h-1zM5 11h3v1h-3zM10 11h2v1h-2zM16 11h2v1h-2zM4 12h3v1h-3zM10 12h3v1h-3zM14 12h2v1h-2z"/><path fill="#000" fill-opacity="1.0" d="M2 6h1v1h-1zM5 6h1v1h-1zM12 7h1v1h-1zM1 9h2v1h-2zM7 9h1v1h-1zM9 9h1v1h-1zM12 9h1v1h-1zM6 10h1v1h-1zM10 10h1v1h-1zM17 10h1v1h-1zM1 11h3v1h-3zM8 11h2v1h-2zM12 11h3v1h-3z"/></svg>
<svg class="abs" style="left:44px;top:535px" width="52" height="20" shape-rendering="crispEdges"><path fill="#000" fill-opacity="0.35" d="M21 5h1v1h-1zM50 5h1v1h-1zM20 6h1v1h-1zM51 6h1v1h-1zM22 7h1v1h-1zM33 7h1v1h-1zM35 7h1v1h-1zM1 8h1v1h-1zM17 8h1v1h-1zM21 8h1v1h-1zM23 8h1v1h-1zM34 8h1v1h-1zM38 8h1v1h-1zM43 8h1v1h-1zM45 8h1v1h-1zM49 8h1v1h-1zM8 9h1v1h-1zM16 9h1v1h-1zM39 9h1v1h-1zM19 10h1v1h-1zM33 10h1v1h-1zM39 10h1v1h-1zM45 10h2v1h-2zM11 11h1v1h-1zM32 11h1v1h-1zM39 11h1v1h-1zM43 11h1v1h-1zM47 11h1v1h-1zM1 12h1v1h-1zM7 12h1v1h-1zM13 12h1v1h-1zM16 12h1v1h-1zM19 12h1v1h-1zM21 12h1v1h-1zM27 12h1v1h-1zM44 12h1v1h-1zM49 12h1v1h-1zM3 13h1v1h-1zM5 13h1v1h-1zM15 13h1v1h-1zM17 13h1v1h-1zM4 14h1v1h-1zM15 14h1v1h-1z"/><path fill="#000" fill-opacity="0.7" d="M20 4h1v1h-1zM13 5h1v1h-1zM27 5h1v1h-1zM41 5h1v1h-1zM51 5h1v1h-1zM33 6h2v1h-2zM48 6h1v1h-1zM20 7h1v1h-1zM48 7h1v1h-1zM24 8h1v1h-1zM46 8h1v1h-1zM23 9h1v1h-1zM33 9h2v1h-2zM41 9h1v1h-1zM50 9h1v1h-1zM4 10h2v1h-2zM16 10h1v1h-1zM18 10h1v1h-1zM23 10h1v1h-1zM32 10h1v1h-1zM38 10h1v1h-1zM41 10h1v1h-1zM6 11h1v1h-1zM9 11h1v1h-1zM13 11h1v1h-1zM17 11h3v1h-3zM22 11h1v1h-1zM24 11h2v1h-2zM27 11h1v1h-1zM36 11h2v1h-2zM41 11h2v1h-2zM44 11h1v1h-1zM46 11h1v1h-1zM48 11h2v1h-2zM5 12h2v1h-2zM9 12h2v1h-2zM17 12h2v1h-2zM22 12h3v1h-3zM36 12h2v1h-2zM42 12h2v1h-2zM46 12h3v1h-3zM38 13h1v1h-1zM2 14h1v1h-1zM38 14h1v1h-1z"/><path fill="#000" fill-opacity="1.0" d="M20 5h1v1h-1zM24 5h1v1h-1zM13 6h1v1h-1zM24 6h1v1h-1zM27 6h1v1h-1zM35 6h1v1h-1zM41 6h1v1h-1zM49 6h2v1h-2zM13 7h1v1h-1zM21 7h1v1h-1zM24 7h1v1h-1zM27 7h1v1h-1zM41 7h1v1h-1zM47 7h1v1h-1zM0 8h1v1h-1zM13 8h1v1h-1zM22 8h1v1h-1zM27 8h1v1h-1zM35 8h1v1h-1zM41 8h1v1h-1zM44 8h1v1h-1zM47 8h2v1h-2zM4 9h1v1h-1zM9 9h2v1h-2zM13 9h1v1h-1zM17 9h2v1h-2zM24 9h1v1h-1zM27 9h1v1h-1zM35 9h1v1h-1zM38 9h1v1h-1zM49 9h1v1h-1zM8 10h1v1h-1zM10 10h1v1h-1zM13 10h1v1h-1zM24 10h1v1h-1zM27 10h1v1h-1zM35 10h1v1h-1zM50 10h1v1h-1zM5 11h1v1h-1zM7 11h2v1h-2zM10 11h1v1h-1zM16 11h1v1h-1zM23 11h1v1h-1zM33 11h3v1h-3zM38 11h1v1h-1zM45 11h1v1h-1zM50 11h1v1h-1zM0 12h1v1h-1zM4 13h1v1h-1zM18 13h1v1h-1zM3 14h1v1h-1zM16 14h2v1h-2z"/></svg>
<svg class="abs" style="left:448px;top:535px" width="24" height="20" shape-rendering="crispEdges"><path fill="#000" fill-opacity="0.35" d="M22 4h2v1h-2zM22 6h2v1h-2zM19 8h1v1h-1zM20 9h1v1h-1zM22 9h1v1h-1zM19 10h1v1h-1zM22 10h1v1h-1zM15 11h1v1h-1zM22 11h1v1h-1zM5 12h1v1h-1zM18 12h1v1h-1zM20 12h1v1h-1zM23 12h1v1h-1zM12 13h1v1h-1zM14 13h1v1h-1zM10 14h1v1h-1zM13 14h1v1h-1z"/><path fill="#000" fill-opacity="0.7" d="M22 5h2v1h-2zM22 7h1v1h-1zM22 8h2v1h-2zM23 9h1v1h-1zM13 10h2v1h-2zM17 10h1v1h-1zM23 10h1v1h-1zM16 11h1v1h-1zM18 11h2v1h-2zM23 11h1v1h-1zM1 12h1v1h-1zM14 12h3v1h-3zM19 12h1v1h-1z"/><path fill="#000" fill-opacity="1.0" d="M23 7h1v1h-1zM13 9h1v1h-1zM18 9h2v1h-2zM20 10h1v1h-1zM14 11h1v1h-1zM17 11h1v1h-1zM20 11h1v1h-1zM0 12h1v1h-1zM3 12h1v1h-1zM6 12h1v1h-1zM13 13h1v1h-1zM11 14h2v1h-2z"/></svg></body></html>
